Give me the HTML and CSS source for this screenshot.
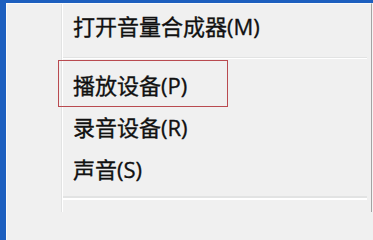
FILE: index.html
```html
<!DOCTYPE html>
<html lang="zh-CN">
<head>
<meta charset="utf-8">
<title>音量菜单</title>
<link rel="stylesheet" href="styles.css">
</head>
<body>
<div class="screen">
  <div class="menu">
    <div class="item">打开音量合成器(M)</div>
    <div class="sep"></div>
    <div class="item marked">播放设备(P)<span class="mark"></span></div>
    <div class="item">录音设备(R)</div>
    <div class="item">声音(S)</div>
    <div class="sep sep-low"></div>
    <div class="item item-cut"></div>
  </div>
  <div class="edge"></div>
</div>
</body>
</html>
```

FILE: styles.css
```css
html, body {
  margin: 0;
  padding: 0;
}

html {
  background: linear-gradient(to right, #1d5fbf 6px, #fcfcfc 6px, #fcfcfc 7px, #f0f0f0 7px);
}

body {
  width: 373px;
  height: 212px;
}

.screen {
  display: flex;
  height: 212px;
  box-sizing: border-box;
  padding: 3px 0 0 6px;
  background: #1d5fbf;
}

.menu {
  width: 364px;
  flex: none;
  background-color: #f0f0f0;
  background-image: linear-gradient(to right,
    transparent 54px,
    #e2e3e3 54px, #e2e3e3 55px,
    #ffffff 55px, #ffffff 56px,
    transparent 56px);
  border-top: 1px solid #fbfbfb;
  border-left: 1px solid #fcfcfc;
  border-right: 1px solid #a3a3a3;
  padding-top: 1px;
  font-family: "Open Sans", "Noto Sans CJK SC", sans-serif;
  font-size: 22px;
  color: #111;
  -webkit-text-stroke: 0.35px #111;
}

.item {
  position: relative;
  height: 42px;
  line-height: 42px;
  padding-left: 66px;
  white-space: nowrap;
}

.item-cut {
  height: 7px;
}

.sep {
  height: 1px;
  margin: 10px 4px 5px 56px;
  background: #e2e3e3;
  border-bottom: 1px solid #ffffff;
}

.sep-low {
  margin-top: 6px;
  height: 2px;
  border-bottom-width: 2px;
}

.mark {
  position: absolute;
  left: 51px;
  top: -4px;
  width: 168px;
  height: 45px;
  border: 1px solid #b94a50;
}

.edge {
  flex: 1;
  background: #e4e4e4;
  border-left: 1px solid #f4f4f4;
}
```
